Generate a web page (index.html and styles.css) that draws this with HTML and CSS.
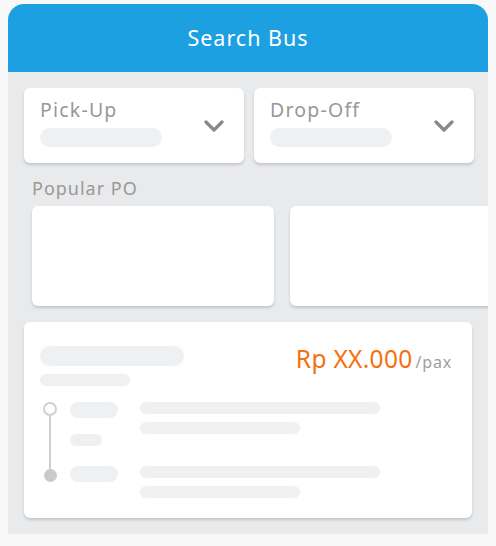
FILE: index.html
```html
<!DOCTYPE html>
<html lang="en">
<head>
<meta charset="UTF-8">
<meta name="viewport" content="width=device-width, initial-scale=1.0">
<title>Search Bus</title>
<link rel="stylesheet" href="styles.css">
</head>
<body>
<div class="phone">
    <div class="header">Search Bus</div>
    <div class="content">
        <div class="selects">
            <div class="select">
                <div class="select-text">
                    <div class="select-label">Pick-Up</div>
                    <div class="bone select-bone"></div>
                </div>
                <svg class="chevron" width="20" height="12" viewBox="0 0 20 12"><path d="M2 2 L10 10 L18 2" fill="none" stroke="#8c8787" stroke-width="3.2" stroke-linecap="round" stroke-linejoin="round"/></svg>
            </div>
            <div class="select">
                <div class="select-text">
                    <div class="select-label">Drop-Off</div>
                    <div class="bone select-bone"></div>
                </div>
                <svg class="chevron" width="20" height="12" viewBox="0 0 20 12"><path d="M2 2 L10 10 L18 2" fill="none" stroke="#8c8787" stroke-width="3.2" stroke-linecap="round" stroke-linejoin="round"/></svg>
            </div>
        </div>
        <div class="section-title">Popular PO</div>
        <div class="po-row">
            <div class="po-card"></div>
            <div class="po-card"></div>
        </div>
        <div class="trip-card">
            <div class="trip-top">
                <div>
                    <div class="bone bone-title"></div>
                    <div class="bone bone-sub"></div>
                </div>
                <div class="price"><span class="amount">Rp XX.000</span><span class="unit">/pax</span></div>
            </div>
            <div class="route">
                <div class="timeline">
                    <div class="dot-open"></div>
                    <div class="line"></div>
                    <div class="dot-fill"></div>
                </div>
                <div class="times">
                    <div class="bone time"></div>
                    <div class="bone dur"></div>
                    <div class="bone time"></div>
                </div>
                <div class="places">
                    <div class="place">
                        <div class="bone long"></div>
                        <div class="bone short"></div>
                    </div>
                    <div class="place">
                        <div class="bone long"></div>
                        <div class="bone short"></div>
                    </div>
                </div>
            </div>
        </div>
    </div>
</div>
</body>
</html>
```

FILE: styles.css
```css
body {
    font-family: "Noto Sans", Arial, sans-serif;
    margin: 0;
    padding: 0;
    background-color: #f8f8f8;
}
.phone {
    width: 480px;
    margin: 4px 8px 0;
    background-color: #e9eaec;
    border-radius: 16px 16px 0 0;
    overflow: hidden;
}
.header {
    height: 68px;
    background-color: #1ca0e2;
    color: #fff;
    font-size: 21.5px;
    letter-spacing: 1px;
    line-height: 68px;
    text-align: center;
}
.content {
    padding: 16px 0 16px 16px;
}
.selects {
    display: flex;
    gap: 10px;
}
.select {
    width: 220px;
    height: 75px;
    box-sizing: border-box;
    padding: 10px 20px 0 16px;
    background-color: #fff;
    border-radius: 6px;
    box-shadow: 0 2px 3px rgba(0, 0, 0, 0.16);
    display: flex;
    justify-content: space-between;
    align-items: flex-start;
}
.select-label {
    font-size: 19.5px;
    letter-spacing: 1.2px;
    color: #9b9797;
    line-height: 24px;
}
.select-bone {
    width: 122px;
    height: 19px;
    margin-top: 6px;
}
.chevron {
    margin-top: 22px;
}
.bone {
    background-color: #eff0f2;
    border-radius: 10px;
}
.section-title {
    font-size: 18px;
    letter-spacing: 1px;
    color: #9b9797;
    margin: 13px 0 0 8px;
    line-height: 24px;
}
.po-row {
    display: flex;
    gap: 16px;
    margin: 6px 0 0 8px;
}
.po-card {
    flex: none;
    width: 242px;
    height: 100px;
    background-color: #fff;
    border-radius: 6px;
    box-shadow: 0 2px 3px rgba(0, 0, 0, 0.16);
}
.trip-card {
    width: 448px;
    height: 196px;
    box-sizing: border-box;
    margin-top: 16px;
    padding: 24px 20px 0 16px;
    background-color: #fff;
    border-radius: 6px;
    box-shadow: 0 2px 3px rgba(0, 0, 0, 0.16);
}
.trip-top {
    display: flex;
    justify-content: space-between;
}
.bone-title {
    width: 144px;
    height: 20px;
}
.bone-sub {
    width: 90px;
    height: 12px;
    margin-top: 8px;
}
.price {
    margin-top: -4px;
}
.amount {
    color: #f5700f;
    font-size: 24.5px;
    letter-spacing: 0.3px;
}
.unit {
    color: #9e9e9e;
    font-size: 16px;
    letter-spacing: 0.8px;
    margin-left: 3px;
}
.route {
    display: flex;
    margin-top: 16px;
}
.timeline {
    width: 14px;
    display: flex;
    flex-direction: column;
    align-items: center;
    margin: 0 13px 0 3px;
}
.dot-open {
    width: 10px;
    height: 10px;
    border: 2px solid #cfd0d2;
    border-radius: 50%;
}
.line {
    width: 2px;
    height: 53px;
    background-color: #cfd0d2;
}
.dot-fill {
    width: 13px;
    height: 13px;
    background-color: #c9cacd;
    border-radius: 50%;
}
.times {
    width: 48px;
    margin-right: 22px;
}
.time {
    width: 48px;
    height: 16px;
}
.dur {
    width: 32px;
    height: 12px;
    margin: 16px 0 20px;
}
.place {
    margin-bottom: 32px;
}
.long {
    width: 240px;
    height: 12px;
}
.short {
    width: 160px;
    height: 12px;
    margin-top: 8px;
}
```
